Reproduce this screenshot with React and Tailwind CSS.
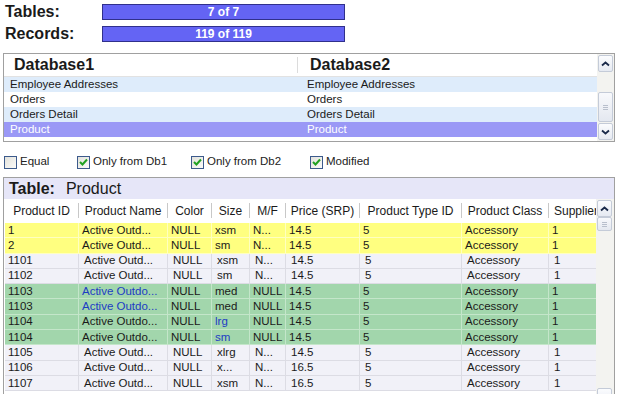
import { useState } from 'react';

const cols = [
  { key: 'id', label: 'Product ID', w: 'w-[74px]' },
  { key: 'name', label: 'Product Name', w: 'w-[89px]' },
  { key: 'color', label: 'Color', w: 'w-[44px]' },
  { key: 'size', label: 'Size', w: 'w-[38px]' },
  { key: 'mf', label: 'M/F', w: 'w-[36px]' },
  { key: 'price', label: 'Price (SRP)', w: 'w-[74px]' },
  { key: 'type', label: 'Product Type ID', w: 'w-[102px]' },
  { key: 'cls', label: 'Product Class', w: 'w-[87px]' },
  { key: 'sup', label: 'Supplier ID', w: 'w-[47px]' },
];

const rows = [
  { kind: 'y', id: '1', name: 'Active Outd...', color: 'NULL', size: 'xsm', mf: 'N...', price: '14.5' },
  { kind: 'y', id: '2', name: 'Active Outd...', color: 'NULL', size: 'sm', mf: 'N...', price: '14.5' },
  { kind: 'w', id: '1101', name: 'Active Outd...', color: 'NULL', size: 'xsm', mf: 'N...', price: '14.5' },
  { kind: 'w', id: '1102', name: 'Active Outd...', color: 'NULL', size: 'sm', mf: 'N...', price: '14.5' },
  { kind: 'g', id: '1103', name: 'Active Outdo...', color: 'NULL', size: 'med', mf: 'NULL', price: '14.5', blue: ['name'] },
  { kind: 'g', id: '1103', name: 'Active Outdo...', color: 'NULL', size: 'med', mf: 'NULL', price: '14.5', blue: ['name'] },
  { kind: 'g', id: '1104', name: 'Active Outdo...', color: 'NULL', size: 'lrg', mf: 'NULL', price: '14.5', blue: ['size'] },
  { kind: 'g', id: '1104', name: 'Active Outdo...', color: 'NULL', size: 'sm', mf: 'NULL', price: '14.5', blue: ['size'] },
  { kind: 'w', id: '1105', name: 'Active Outd...', color: 'NULL', size: 'xlrg', mf: 'N...', price: '14.5' },
  { kind: 'w', id: '1106', name: 'Active Outd...', color: 'NULL', size: 'x...', mf: 'N...', price: '16.5' },
  { kind: 'w', id: '1107', name: 'Active Outd...', color: 'NULL', size: 'xsm', mf: 'N...', price: '16.5' },
];

function Chevron({ down }) {
  return (
    <svg width="9" height="6" viewBox="0 0 9 6">
      <path
        d={down ? 'M1 1.5 L4.5 4.5 L8 1.5' : 'M1 4.5 L4.5 1.5 L8 4.5'}
        fill="none"
        stroke="#1a2a4a"
        strokeWidth="1.8"
      />
    </svg>
  );
}

function ScrollBtn({ down }) {
  return (
    <div className="h-[17px] w-[15px] rounded-[2px] border border-[#c4cbd8] bg-gradient-to-b from-[#fbfcfe] to-[#e6eaf2] flex items-center justify-center">
      <Chevron down={down} />
    </div>
  );
}

function Thumb({ h }) {
  return (
    <div className={`${h} w-[15px] rounded-[2px] border border-[#c4cbd8] bg-gradient-to-b from-[#f8f9fc] to-[#e4e8f0] flex items-center justify-center`}>
      <div className="flex flex-col gap-[1px]">
        <div className="h-px w-[5px] bg-[#b8bfcc]" />
        <div className="h-px w-[5px] bg-[#b8bfcc]" />
        <div className="h-px w-[5px] bg-[#b8bfcc]" />
      </div>
    </div>
  );
}

function Check({ checked, label }) {
  return (
    <div className="flex items-center gap-[3px]">
      <div className="h-[13px] w-[13px] border border-[#3c5a8c] bg-gradient-to-br from-[#e2e2dc] to-[#fbfbf9] flex items-center justify-center">
        {checked && (
          <svg width="9" height="8" viewBox="0 0 9 8">
            <path d="M1 4 L3.5 6.5 L8 1.5" fill="none" stroke="#21a121" strokeWidth="2" />
          </svg>
        )}
      </div>
      <span className="text-[11.5px] text-[#222]">{label}</span>
    </div>
  );
}

function Bar({ text }) {
  return (
    <div className="h-[16px] w-[243px] bg-[#6464f4] border border-[#30308c] flex items-center justify-center">
      <span className="text-[12px] font-bold text-white">{text}</span>
    </div>
  );
}

export default function App() {
  const [filters] = useState({ equal: false, db1: true, db2: true, modified: true });

  const dbRows = [
    { a: 'Employee Addresses', bg: 'bg-[#deecfb]' },
    { a: 'Orders', bg: 'bg-white' },
    { a: 'Orders Detail', bg: 'bg-[#deecfb]' },
    { a: 'Product', bg: 'bg-[#9a98f6] text-white' },
  ];

  const rowBg = { y: 'bg-[#ffff80]', g: 'bg-[#a2d6ac]', w: 'bg-[#f1f1f8]' };
  const rowLine = { y: 'border-[#ffffc0]', g: 'border-[#c4e6ca]', w: 'border-[#dcdce4]' };

  return (
    <div className="w-[618px] h-[394px] overflow-hidden bg-white text-[#1a1a1a] font-['Liberation_Sans',Arial,sans-serif]">
      {/* Progress */}
      <div className="pt-[4px] pl-[5px] flex flex-col gap-[6px]">
        <div className="flex items-center">
          <span className="w-[97px] text-[16px] font-bold leading-none">Tables:</span>
          <Bar text="7 of 7" />
        </div>
        <div className="flex items-center">
          <span className="w-[97px] text-[16px] font-bold leading-none">Records:</span>
          <Bar text="119 of 119" />
        </div>
      </div>

      {/* Database list */}
      <div className="mt-[11px] mx-[3px] h-[89px] border border-[#a0a0a0] flex">
        <div className="flex-1 flex flex-col">
          <div className="h-[23px] flex items-center border-b border-[#e2e2e2]">
            <div className="w-[294px] pl-[10px] text-[16px] font-bold border-r border-[#dcdcdc] leading-[16px]">Database1</div>
            <div className="pl-[12px] text-[16px] font-bold leading-[16px]">Database2</div>
          </div>
          {dbRows.map((r) => (
            <div key={r.a} className={`h-[15px] flex items-center text-[11.5px] ${r.bg}`}>
              <div className="w-[297px] pl-[6px]">{r.a}</div>
              <div className="pl-[6px]">{r.a}</div>
            </div>
          ))}
        </div>
        <div className="w-[17px] bg-[#f3f3f0] flex flex-col justify-between p-px">
          <ScrollBtn />
          <div className="flex-1 flex flex-col justify-end pb-[1px]">
            <Thumb h="h-[30px]" />
          </div>
          <ScrollBtn down />
        </div>
      </div>

      {/* Filters */}
      <div className="mt-[12px] pl-[4px] h-[16px] flex items-center">
        <div className="w-[73px]"><Check checked={filters.equal} label="Equal" /></div>
        <div className="w-[114px]"><Check checked={filters.db1} label="Only from Db1" /></div>
        <div className="w-[119px]"><Check checked={filters.db2} label="Only from Db2" /></div>
        <Check checked={filters.modified} label="Modified" />
      </div>

      {/* Table panel */}
      <div className="mt-[7px] mx-[3px] h-[230px] border border-[#a0a0a0] flex flex-col">
        <div className="h-[21px] bg-[#e6e6f8] flex items-center pl-[5px] text-[16px] leading-none">
          <span className="font-bold">Table:</span>
          <span className="ml-[11px]">Product</span>
        </div>
        <div className="flex flex-1">
          <div className="w-[592px] overflow-hidden pl-[1px]">
            <div className="h-[23px] flex items-center bg-white">
              {cols.map((c, i) => (
                <div
                  key={c.key}
                  className={`${c.w} shrink-0 h-[15px] flex items-center whitespace-nowrap overflow-hidden ${i < cols.length - 1 ? 'justify-center border-r border-[#c8c8c8]' : 'pl-[5px]'}`}
                >
                  <span className="text-[12px]">{c.label}</span>
                </div>
              ))}
            </div>
            <div className="mt-[1px]">
              {rows.map((r, ri) => {
                const vals = { ...r, type: '5', cls: 'Accessory', sup: '1' };
                return (
                  <div key={ri} className={`h-[15.3px] flex items-center text-[11.5px] border-b ${rowBg[r.kind]} ${rowLine[r.kind]}`}>
                    {cols.map((c, i) => (
                      <div
                        key={c.key}
                        className={`${c.w} shrink-0 h-full flex items-center whitespace-nowrap overflow-hidden ${r.kind === 'w' && i > 0 ? 'pl-[5px]' : 'pl-[3px]'} ${i < cols.length - 1 ? `border-r ${rowLine[r.kind]}` : ''} ${r.blue && r.blue.includes(c.key) ? 'text-[#1c3cc4]' : ''}`}
                      >
                        {vals[c.key]}
                      </div>
                    ))}
                  </div>
                );
              })}
            </div>
          </div>
          <div className="w-[18px] bg-[#f3f3f0] flex flex-col p-px">
            <ScrollBtn />
            <Thumb h="h-[14px]" />
            <div className="flex-1" />
            <ScrollBtn down />
          </div>
        </div>
      </div>
    </div>
  );
}
